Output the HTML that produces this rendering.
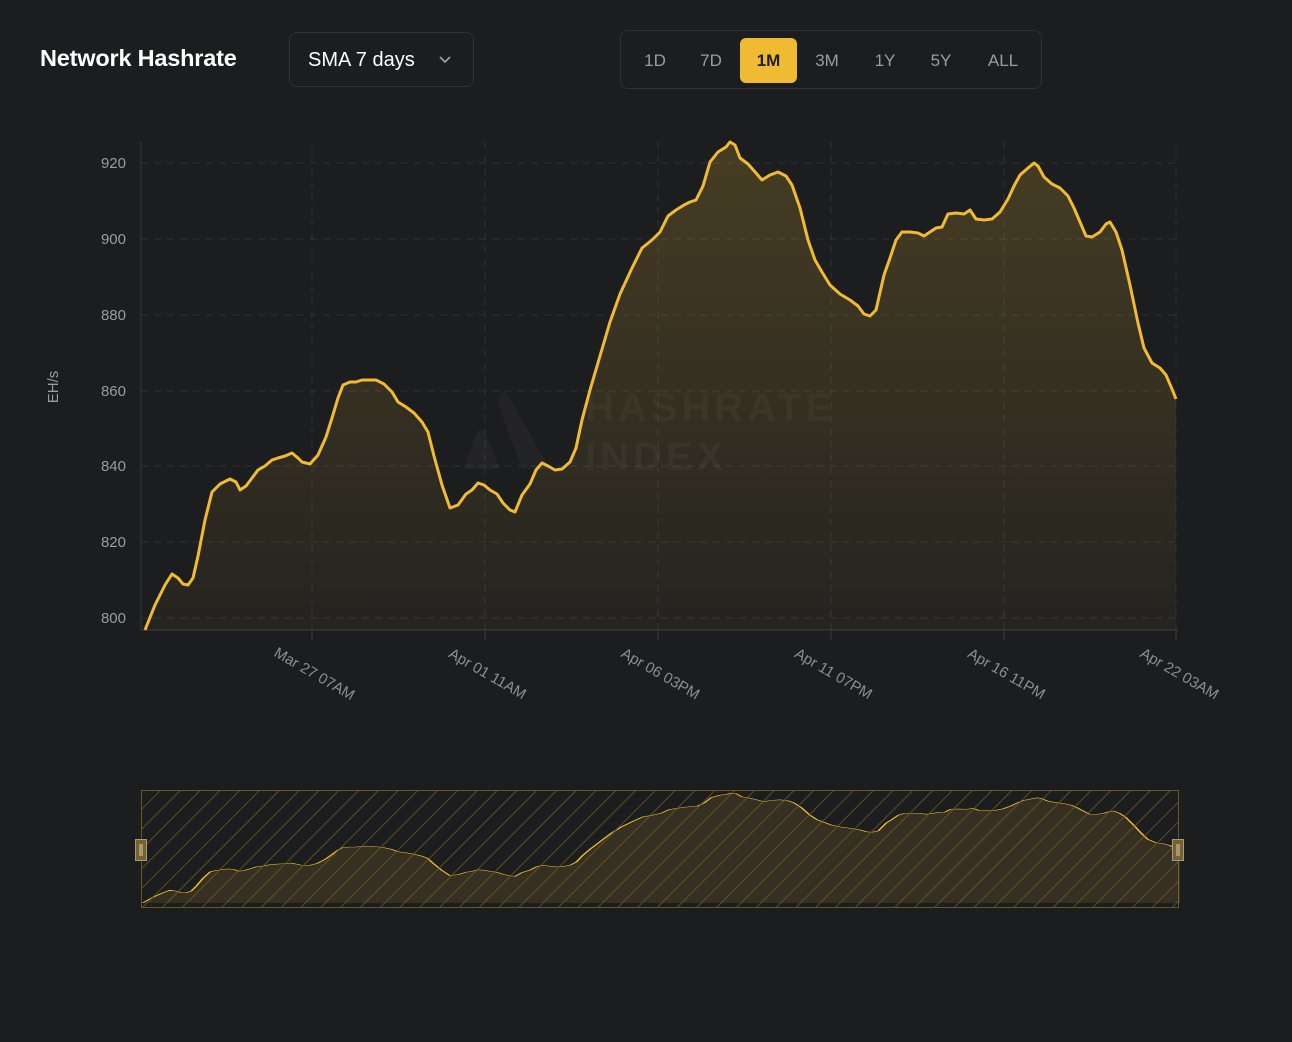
<!DOCTYPE html>
<html><head><meta charset="utf-8"><style>
html,body{margin:0;padding:0;background:#1c1d1f;width:1292px;height:1042px;overflow:hidden;font-family:"Liberation Sans",sans-serif}
.title{position:absolute;left:40px;top:45px;font-size:23.5px;font-weight:bold;color:#fff;letter-spacing:-0.2px}
.dd{position:absolute;left:289px;top:32px;width:185px;height:55px;border:1px solid #2f3134;border-radius:8px;box-sizing:border-box;color:#fff;font-size:20px;line-height:54px;padding-left:18px}
.dd svg{position:absolute;left:148px;top:22px}
.grp{position:absolute;left:620px;top:30px;width:422px;height:59px;border:1px solid #2f3134;border-radius:8px;box-sizing:border-box}
.b{position:absolute;top:7px;height:45px;line-height:45px;font-size:17px;color:#9a9ca1;text-align:center}
.b.on{background:#f0bb32;color:#1c1d1f;border-radius:6px;font-weight:bold}
</style></head><body>
<div class="title">Network Hashrate</div>
<div class="dd">SMA 7 days<svg width="14" height="10" viewBox="0 0 14 10"><path d="M2 2l5 5 5-5" stroke="#9a9ca1" stroke-width="1.8" fill="none"/></svg></div>
<div class="grp">
<div class="b" style="left:14px;width:40px">1D</div>
<div class="b" style="left:70px;width:40px">7D</div>
<div class="b on" style="left:119px;width:57px">1M</div>
<div class="b" style="left:186px;width:40px">3M</div>
<div class="b" style="left:244px;width:40px">1Y</div>
<div class="b" style="left:300px;width:40px">5Y</div>
<div class="b" style="left:358px;width:48px">ALL</div>
</div>
<svg width="1292" height="1042" style="position:absolute;left:0;top:0">
<defs>
<linearGradient id="g" x1="0" y1="0" x2="0" y2="1"><stop offset="0" stop-color="#f0bb32" stop-opacity="0.2"/><stop offset="1" stop-color="#f0bb32" stop-opacity="0.04"/></linearGradient>
<pattern id="h" width="14" height="14" patternUnits="userSpaceOnUse" patternTransform="rotate(45)"><line x1="0" y1="0" x2="0" y2="14" stroke="#6e5a22" stroke-width="1.6"/></pattern>
<path id="ln" d="M145,630 L155,605 L165,585 L172,574 L178,578 L183,584 L188,585 L193,578 L198,556 L205,520 L212,492 L220,484 L230,479 L236,482 L240,490 L246,486 L252,478 L258,470 L265,466 L272,460 L278,458 L285,456 L292,453 L298,458 L302,462 L310,464 L318,455 L326,437 L332,418 L338,398 L343,385 L350,382 L356,382 L362,380 L376,380 L384,384 L392,392 L398,402 L406,407 L414,413 L422,422 L428,432 L434,456 L442,485 L450,508 L458,505 L466,494 L472,490 L478,483 L484,485 L490,490 L497,494 L503,503 L510,510 L515,512 L522,495 L530,484 L536,470 L542,463 L548,466 L555,470 L562,469 L570,462 L576,448 L582,420 L590,390 L600,356 L610,322 L620,294 L632,268 L642,248 L652,240 L660,232 L668,216 L676,210 L684,205 L690,202 L696,200 L703,186 L710,162 L718,152 L726,147 L730,142 L735,145 L740,158 L748,164 L756,173 L762,180 L770,175 L778,172 L786,176 L792,185 L800,208 L808,240 L815,260 L822,272 L830,285 L840,294 L850,300 L858,306 L864,314 L870,316 L876,310 L884,275 L890,258 L896,240 L902,232 L910,232 L918,233 L924,236 L930,232 L936,228 L942,227 L948,214 L956,213 L964,214 L970,210 L976,219 L984,220 L992,219 L1000,212 L1008,199 L1014,186 L1020,175 L1028,168 L1034,163 L1038,166 L1044,177 L1052,184 L1060,188 L1068,196 L1074,208 L1080,222 L1086,236 L1092,237 L1100,232 L1106,224 L1110,222 L1116,232 L1122,250 L1130,285 L1138,323 L1144,348 L1152,363 L1160,368 L1166,375 L1172,389 L1176,399"/>
<path id="ar" d="M145,630 L155,605 L165,585 L172,574 L178,578 L183,584 L188,585 L193,578 L198,556 L205,520 L212,492 L220,484 L230,479 L236,482 L240,490 L246,486 L252,478 L258,470 L265,466 L272,460 L278,458 L285,456 L292,453 L298,458 L302,462 L310,464 L318,455 L326,437 L332,418 L338,398 L343,385 L350,382 L356,382 L362,380 L376,380 L384,384 L392,392 L398,402 L406,407 L414,413 L422,422 L428,432 L434,456 L442,485 L450,508 L458,505 L466,494 L472,490 L478,483 L484,485 L490,490 L497,494 L503,503 L510,510 L515,512 L522,495 L530,484 L536,470 L542,463 L548,466 L555,470 L562,469 L570,462 L576,448 L582,420 L590,390 L600,356 L610,322 L620,294 L632,268 L642,248 L652,240 L660,232 L668,216 L676,210 L684,205 L690,202 L696,200 L703,186 L710,162 L718,152 L726,147 L730,142 L735,145 L740,158 L748,164 L756,173 L762,180 L770,175 L778,172 L786,176 L792,185 L800,208 L808,240 L815,260 L822,272 L830,285 L840,294 L850,300 L858,306 L864,314 L870,316 L876,310 L884,275 L890,258 L896,240 L902,232 L910,232 L918,233 L924,236 L930,232 L936,228 L942,227 L948,214 L956,213 L964,214 L970,210 L976,219 L984,220 L992,219 L1000,212 L1008,199 L1014,186 L1020,175 L1028,168 L1034,163 L1038,166 L1044,177 L1052,184 L1060,188 L1068,196 L1074,208 L1080,222 L1086,236 L1092,237 L1100,232 L1106,224 L1110,222 L1116,232 L1122,250 L1130,285 L1138,323 L1144,348 L1152,363 L1160,368 L1166,375 L1172,389 L1176,399 L1176,630 Z"/>
</defs>
<g stroke="#2f3134" stroke-width="1" stroke-dasharray="7 6">
<line x1="141" y1="163" x2="1176" y2="163"/><line x1="141" y1="239" x2="1176" y2="239"/><line x1="141" y1="315" x2="1176" y2="315"/><line x1="141" y1="391" x2="1176" y2="391"/><line x1="141" y1="466" x2="1176" y2="466"/><line x1="141" y1="542" x2="1176" y2="542"/><line x1="141" y1="618" x2="1176" y2="618"/>
<line x1="312" y1="142" x2="312" y2="630"/><line x1="485" y1="142" x2="485" y2="630"/><line x1="658" y1="142" x2="658" y2="630"/><line x1="831" y1="142" x2="831" y2="630"/><line x1="1004" y1="142" x2="1004" y2="630"/><line x1="1176" y1="142" x2="1176" y2="630"/>
</g>
<line x1="141" y1="142" x2="141" y2="630" stroke="#34363a"/>
<line x1="141" y1="630" x2="1178" y2="630" stroke="#3a3c40"/>
<g stroke="#3a3c40"><line x1="312" y1="630" x2="312" y2="640"/><line x1="485" y1="630" x2="485" y2="640"/><line x1="658" y1="630" x2="658" y2="640"/><line x1="831" y1="630" x2="831" y2="640"/><line x1="1004" y1="630" x2="1004" y2="640"/><line x1="1176" y1="630" x2="1176" y2="640"/></g>
<g fill="#9a9ca1" font-size="15" text-anchor="end" font-family="Liberation Sans,sans-serif">
<text x="126" y="168">920</text><text x="126" y="244">900</text><text x="126" y="320">880</text><text x="126" y="396">860</text><text x="126" y="471">840</text><text x="126" y="547">820</text><text x="126" y="623">800</text>
</g>
<text transform="translate(58,387) rotate(-90)" fill="#9a9ca1" font-size="15" text-anchor="middle">EH/s</text>
<g fill="#8a8d93" font-size="15" text-anchor="middle">
<text transform="translate(312,678) rotate(30)">Mar 27 07AM</text>
<text transform="translate(485,678) rotate(30)">Apr 01 11AM</text>
<text transform="translate(658,678) rotate(30)">Apr 06 03PM</text>
<text transform="translate(831,678) rotate(30)">Apr 11 07PM</text>
<text transform="translate(1004,678) rotate(30)">Apr 16 11PM</text>
<text transform="translate(1177,678) rotate(30)">Apr 22 03AM</text>
</g>
<use href="#ar" fill="url(#g)" stroke="none"/>
<g fill="#ffffff" fill-opacity="0.035" font-weight="bold" font-size="40" letter-spacing="4">
<text x="585" y="421">HASHRATE</text><text x="585" y="470">INDEX</text>
<path d="M463,469 L477,432 Q480,427 485,432 L500,469 Z"/><path d="M500,395 Q503,390 508,396 L550,469 L522,469 L498,403 Z"/>
</g>
<use href="#ln" fill="none" stroke="#f0bb32" stroke-width="3" stroke-linejoin="round"/>
<rect x="141.5" y="790.5" width="1037" height="117" fill="#1c1d1f" stroke="#6a5622"/>
<g transform="translate(-3,761.1) scale(1.006,0.225)"><use href="#ar" fill="#f0bb32" fill-opacity="0.12" stroke="none"/><use href="#ln" fill="none" stroke="#f0bb32" stroke-width="2" vector-effect="non-scaling-stroke"/></g>
<rect x="142" y="791" width="1036" height="116" fill="url(#h)"/>
<rect x="135.5" y="839.5" width="11" height="21" fill="#7a6226" stroke="#9a9a9a"/>
<line x1="140" y1="844" x2="140" y2="856" stroke="#ccc"/><line x1="142" y1="844" x2="142" y2="856" stroke="#ccc"/>
<rect x="1172.5" y="839.5" width="11" height="21" fill="#7a6226" stroke="#9a9a9a"/>
<line x1="1177" y1="844" x2="1177" y2="856" stroke="#ccc"/><line x1="1179" y1="844" x2="1179" y2="856" stroke="#ccc"/>
</svg>
</body></html>
